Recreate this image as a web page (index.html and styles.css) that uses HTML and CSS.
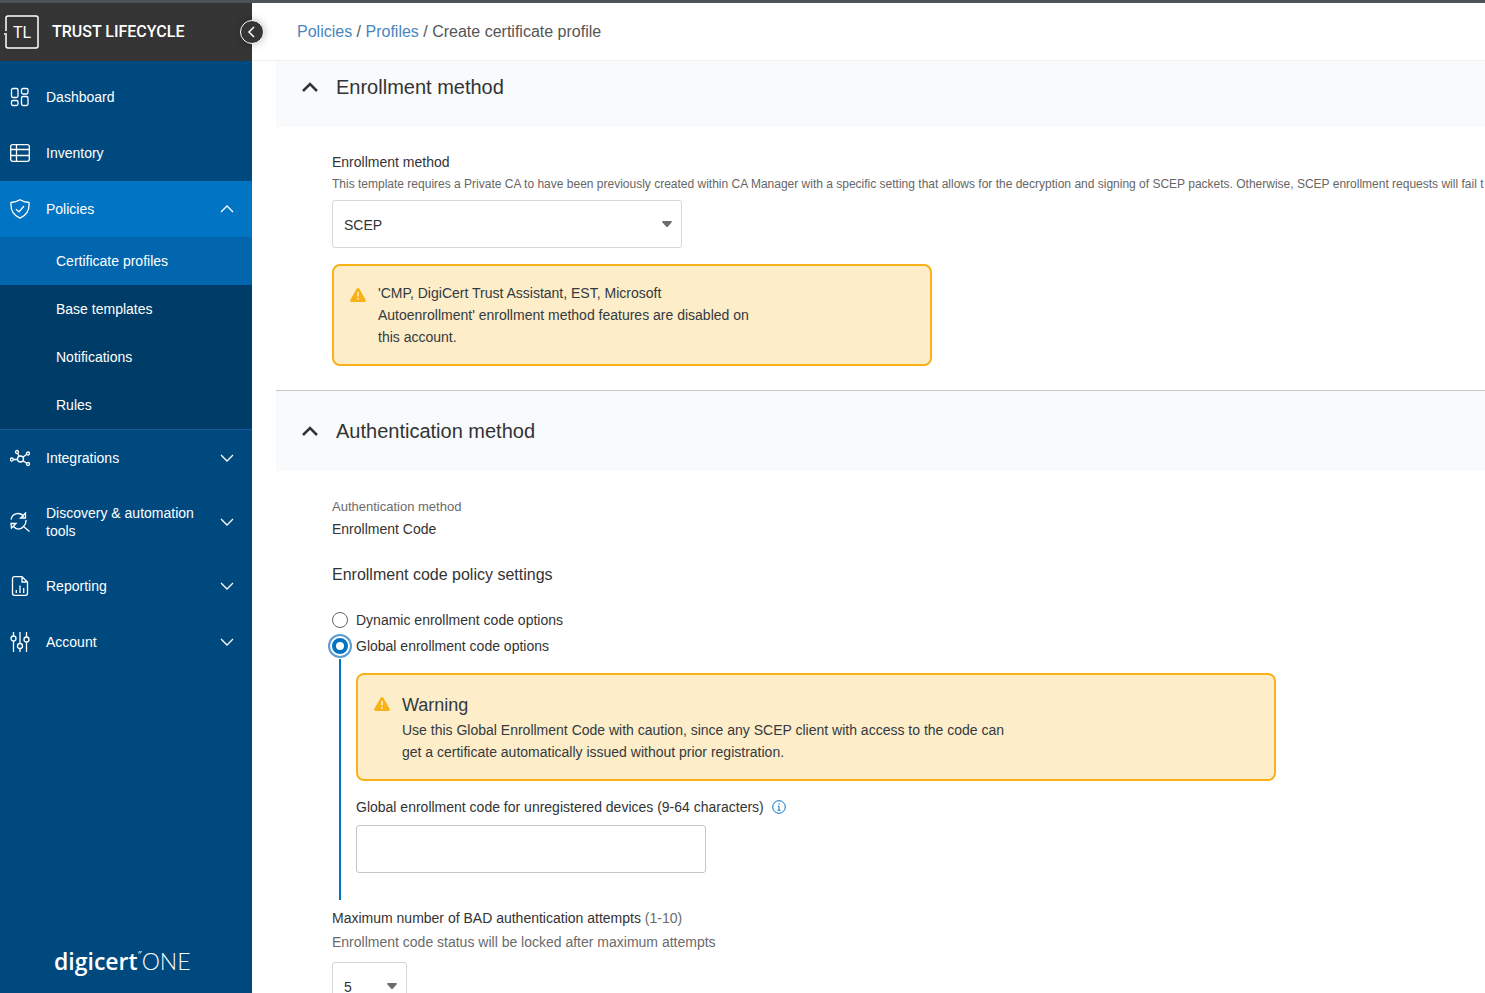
FILE: index.html
```
<!DOCTYPE html>
<html lang="en">
<head>
    <meta charset="UTF-8">
    <title>Create certificate profile</title>
    <link rel="stylesheet" href="styles.css">
</head>
<body>
    <div class="app">
        <aside class="sidebar">
            <div class="brand">
                <svg class="brand-logo" width="36" height="36" viewBox="0 0 36 36" fill="none" stroke="#fff" stroke-width="1.5">
                    <path d="M2 17V4q0-2 2-2h28q2 0 2 2v28q0 2-2 2H4q-2 0-2-2V21"/>
                    <path d="M0 20h3"/>
                    <text class="brand-initials" x="18" y="24" text-anchor="middle">TL</text>
                </svg>
                <span class="brand-name">TRUST LIFECYCLE</span>
                <button class="collapse" aria-label="Collapse menu">
                    <svg width="10" height="12" viewBox="0 0 10 12" fill="none" stroke="#fff" stroke-width="1.5"><path d="M7 1L2 6l5 5"/></svg>
                </button>
            </div>

            <nav class="menu">
                <a class="menu-item" href="#">
                    <svg class="icon" viewBox="0 0 20 20"><rect x="1.5" y="1.5" width="6.5" height="9" rx="1.5"/><rect x="11.5" y="1.5" width="6.5" height="5.5" rx="1.5"/><rect x="1.5" y="13.5" width="6.5" height="5" rx="1.5"/><rect x="11.5" y="9.5" width="6.5" height="9" rx="1.5"/></svg>
                    <span>Dashboard</span>
                </a>
                <a class="menu-item" href="#">
                    <svg class="icon" viewBox="0 0 20 20"><rect x=".7" y="1.7" width="18.6" height="16.6" rx="2"/><path d="M1 6.5h18M1 12.5h18M6.5 2v16"/></svg>
                    <span>Inventory</span>
                </a>
                <a class="menu-item active" href="#">
                    <svg class="icon" viewBox="0 0 20 20"><path d="M10 .8c3 1.9 5.700 2.500 9 2.700.6 7-1.500 12.500-9 15.700C2.500 16 .4 10.500 1 3.500 4.300 3.300 7 2.700 10 .8zM6 10.200l3 2.600L14 7"/></svg>
                    <span>Policies</span>
                    <svg class="chevron" viewBox="0 0 12 8"><path d="M0 7l6-6 6 6"/></svg>
                </a>
                <div class="submenu">
                    <a class="selected" href="#">Certificate profiles</a>
                    <a href="#">Base templates</a>
                    <a href="#">Notifications</a>
                    <a href="#">Rules</a>
                </div>
                <a class="menu-item" href="#">
                    <svg class="icon" viewBox="0 0 20 20"><circle cx="10.500" cy="11" r="3"/><circle cx="1.800" cy="11.500" r="1.500"/><circle cx="7" cy="4" r="1.500"/><circle cx="18" cy="5.500" r="1.500"/><circle cx="18" cy="16" r="1.500"/><path d="M3.300 11.500h4.200M7.700 5.500l1.500 2.800M16.700 6.200l-3.800 3M16.700 15.200l-3.600-2.400"/></svg>
                    <span>Integrations</span>
                    <svg class="chevron" viewBox="0 0 12 8"><path d="M0 1l6 6 6-6"/></svg>
                </a>
                <a class="menu-item" href="#">
                    <svg class="icon" viewBox="0 0 20 20"><path d="M1 7.500C2.500 1 10-.5 14 4.500M15.500 1v5h-5zM1 11.500h5l-4.500 4.500zM3.500 14.500c3 3.500 7 3.500 10 0M16 8c.3 3-1 5-2.500 6.500l6 5"/></svg>
                    <span>Discovery &amp; automation tools</span>
                    <svg class="chevron" viewBox="0 0 12 8"><path d="M0 1l6 6 6-6"/></svg>
                </a>
                <a class="menu-item" href="#">
                    <svg class="icon" viewBox="0 0 20 20"><path d="M12 .7H4.500q-2 0-2 2v14.600q0 2 2 2h11q2 0 2-2V6L12 .7V6h5.500M6.300 17v-3M10 17V9.500M13.700 17v-5"/></svg>
                    <span>Reporting</span>
                    <svg class="chevron" viewBox="0 0 12 8"><path d="M0 1l6 6 6-6"/></svg>
                </a>
                <a class="menu-item" href="#">
                    <svg class="icon" viewBox="0 0 20 20"><circle cx="3.500" cy="6.500" r="2.500"/><circle cx="10" cy="14" r="2.500"/><circle cx="16.500" cy="7.500" r="2.500"/><path d="M3.500 0v4M3.500 9v11M10 0v11.500M10 16.500V20M16.500 0v5M16.500 10v10"/></svg>
                    <span>Account</span>
                    <svg class="chevron" viewBox="0 0 12 8"><path d="M0 1l6 6 6-6"/></svg>
                </a>
            </nav>

            <div class="footer-logo"><b>digicert</b><sup>&Prime;</sup><span>ONE</span></div>
        </aside>

        <main class="content">
            <header class="breadcrumb">
                <a href="#">Policies</a> / <a href="#">Profiles</a> / Create certificate profile
            </header>

            <section class="section">
                <h2 class="section-title scrolled">
                    <svg width="16" height="10" viewBox="0 0 16 10" fill="none" stroke="#333" stroke-width="2.500"><path d="M1 9l7-7 7 7"/></svg>
                    Enrollment method
                </h2>
                <div class="section-body">
                    <label class="field-label" for="method">Enrollment method</label>
                    <p class="hint">This template requires a Private CA to have been previously created within CA Manager with a specific setting that allows for the decryption and signing of SCEP packets. Otherwise, SCEP enrollment requests will fail t</p>
                    <div class="select">
                        <select id="method"><option>SCEP</option></select>
                        <svg width="10" height="6" viewBox="0 0 10 6" fill="#696d70"><path d="M1 0h8q1.500 0 .5 1.500L6 5.500q-1 1-2 0L.5 1.500Q-.5 0 1 0z"/></svg>
                    </div>
                    <div class="alert alert-small">
                        <svg class="alert-icon" viewBox="0 0 16 14"><path fill="#f8b217" d="M6.700.8q1.300-1.600 2.600 0l6.300 11q.8 2-1.100 2.200h-13Q-.4 13.800.4 11.800z"/><path stroke="#fdedc8" stroke-width="1.600" d="M8 4v4.500M8 10v1.700"/></svg>
                        <p>'CMP, DigiCert Trust Assistant, EST, Microsoft Autoenrollment' enrollment method features are disabled on this account.</p>
                    </div>
                </div>
            </section>

            <section class="section">
                <h2 class="section-title">
                    <svg width="16" height="10" viewBox="0 0 16 10" fill="none" stroke="#333" stroke-width="2.500"><path d="M1 9l7-7 7 7"/></svg>
                    Authentication method
                </h2>
                <div class="section-body">
                    <div class="caption">Authentication method</div>
                    <div class="value">Enrollment Code</div>
                    <h3>Enrollment code policy settings</h3>
                    <label class="radio"><input type="radio" name="code-options">Dynamic enrollment code options</label>
                    <label class="radio"><input type="radio" name="code-options" checked>Global enrollment code options</label>

                    <div class="nested">
                        <div class="alert alert-wide">
                            <svg class="alert-icon" viewBox="0 0 16 14"><path fill="#f8b217" d="M6.700.8q1.300-1.600 2.600 0l6.300 11q.8 2-1.100 2.200h-13Q-.4 13.800.4 11.800z"/><path stroke="#fdedc8" stroke-width="1.600" d="M8 4v4.500M8 10v1.700"/></svg>
                            <div>
                                <h4>Warning</h4>
                                <p>Use this Global Enrollment Code with caution, since any SCEP client with access to the code can get a certificate automatically issued without prior registration.</p>
                            </div>
                        </div>
                        <div class="code-label">
                            <label for="global-code">Global enrollment code for unregistered devices (9-64 characters)</label>
                            <svg width="14" height="14" viewBox="0 0 14 14" fill="none" stroke="#0174c3"><circle cx="7" cy="7" r="6.300"/><path d="M7 3.200v1.400M5.800 6.200H7v4M5.500 10.200h3"/></svg>
                        </div>
                        <input class="text-input" id="global-code" type="text">
                    </div>

                    <label class="attempts-label" for="attempts">Maximum number of BAD authentication attempts <span>(1-10)</span></label>
                    <p class="attempts-hint">Enrollment code status will be locked after maximum attempts</p>
                    <div class="select select-small">
                        <select id="attempts"><option>5</option></select>
                        <svg width="10" height="6" viewBox="0 0 10 6" fill="#696d70"><path d="M1 0h8q1.500 0 .5 1.500L6 5.500q-1 1-2 0L.5 1.500Q-.5 0 1 0z"/></svg>
                    </div>
                </div>
            </section>
        </main>
    </div>
</body>
</html>
```
FILE: styles.css
```
* {
    box-sizing: border-box;
}
body {
    margin: 0;
    font-family: "Liberation Sans", Arial, sans-serif;
    font-size: 14px;
    line-height: 22px;
    color: #333;
    background-color: #fff;
}
h2, h3, h4, p {
    margin: 0;
    font-weight: normal;
}
.app {
    display: flex;
    height: 100vh;
    border-top: 3px solid #4b5559;
    overflow: hidden;
}

/* Sidebar */
.sidebar {
    display: flex;
    flex-direction: column;
    flex: none;
    width: 252px;
    background-color: #00497f;
    color: #fff;
}
.brand {
    position: relative;
    display: flex;
    align-items: center;
    gap: 12px;
    height: 58px;
    padding-left: 4px;
    background-color: #353535;
}
.brand-initials {
    font-family: Roboto, sans-serif;
    font-size: 16px;
    fill: #fff;
    stroke: none;
}
.brand-name {
    font-family: Roboto, sans-serif;
    font-size: 16px;
    font-weight: 500;
}
.collapse {
    position: absolute;
    right: -12px;
    top: 17px;
    display: flex;
    align-items: center;
    justify-content: center;
    width: 24px;
    height: 24px;
    padding: 0;
    border: 1px solid #fff;
    border-radius: 50%;
    background-color: #353535;
    box-shadow: 0 0 8px rgba(0,0,0,0.25);
    cursor: pointer;
}
.menu {
    padding-top: 8px;
}
.menu-item {
    display: flex;
    align-items: center;
    gap: 16px;
    min-height: 56px;
    padding: 18px 19px 18px 10px;
    line-height: 18px;
    color: #fff;
    text-decoration: none;
}
.menu-item span {
    flex: 1;
}
.menu-item.active {
    background-color: #0174c3;
}
.icon {
    flex: none;
    width: 20px;
    height: 20px;
    fill: none;
    stroke: #fff;
    stroke-width: 1.3;
}
.chevron {
    flex: none;
    width: 12px;
    height: 8px;
    fill: none;
    stroke: #fff;
    stroke-width: 1.3;
    overflow: visible;
}
.submenu {
    background-color: #003c68;
    border-bottom: 1px solid #16599a;
}
.submenu a {
    display: block;
    padding: 13px 56px;
    color: #fff;
    text-decoration: none;
}
.submenu .selected {
    background-color: #0166ad;
}
.footer-logo {
    display: flex;
    align-items: center;
    margin-top: auto;
    padding: 0 0 16px 54px;
    font-family: "Open Sans", sans-serif;
    font-size: 23px;
    line-height: 32px;
}
.footer-logo b {
    font-weight: 600;
}
.footer-logo sup {
    align-self: flex-start;
    font-size: 10px;
    line-height: 20px;
}
.footer-logo span {
    font-family: Lato, sans-serif;
    font-weight: 300;
}

/* Content */
.content {
    flex: 1;
    min-width: 0;
}
.breadcrumb {
    height: 58px;
    padding: 18px 45px 17px;
    border-bottom: 1px solid #eef0f2;
    font-size: 16px;
    color: #555;
}
.breadcrumb a {
    color: #4a86bd;
    text-decoration: none;
}
.section {
    margin-left: 24px;
}
.section + .section {
    border-top: 1px solid #c4c6c8;
}
.section-title {
    display: flex;
    align-items: center;
    gap: 18px;
    height: 80px;
    padding-left: 26px;
    background-color: #f8fafc;
    font-size: 20px;
}
.section-title.scrolled {
    height: 66px;
    padding-bottom: 14px;
}
.section-body {
    padding: 24px 0 24px 56px;
}
.field-label {
    display: block;
}
.hint {
    margin-bottom: 5px;
    font-size: 12px;
    color: #666;
    white-space: nowrap;
    overflow: hidden;
}
.select {
    display: grid;
    align-items: center;
    width: 350px;
}
.select select,
.select svg {
    grid-area: 1 / 1;
}
.select svg {
    justify-self: end;
    margin-right: 10px;
    pointer-events: none;
}
.select select {
    appearance: none;
    width: 100%;
    height: 48px;
    padding: 1px 11px 0;
    border: 1px solid #d4d6d8;
    border-radius: 3px;
    background-color: #fff;
    font: inherit;
    color: #333;
}
.select-small {
    width: 75px;
}
.alert {
    display: flex;
    gap: 12px;
    padding: 16px;
    border: 2px solid #f8b217;
    border-radius: 8px;
    background-color: #fdedc8;
    color: #333a41;
}
.alert-small {
    max-width: 600px;
    margin-top: 16px;
}
.alert-small p {
    max-width: 380px;
}
.alert-wide {
    max-width: 920px;
}
.alert-wide p {
    max-width: 610px;
}
.alert h4 {
    font-size: 18px;
    line-height: 28px;
}
.alert-icon {
    flex: none;
    width: 16px;
    height: 14px;
    margin-top: 6px;
}
.caption {
    padding-top: 1px;
    font-size: 13px;
    color: #6b6b6b;
}
.section-body h3 {
    margin: 23px 0 20px;
    font-size: 16px;
    line-height: 24px;
}
.radio {
    display: flex;
    align-items: center;
    gap: 8px;
    line-height: 26px;
}
.radio input {
    appearance: none;
    width: 16px;
    height: 16px;
    margin: 0;
    border: 1px solid #666;
    border-radius: 50%;
    background-color: #fff;
}
.radio input:checked {
    border: 4px solid #0174c3;
    box-shadow: 0 0 0 2px #fff, 0 0 0 4px #5b9bd3;
}
.nested {
    margin-left: 7px;
    padding: 14px 0 27px 15px;
    border-left: 2px solid #0174c3;
}
.code-label {
    display: flex;
    align-items: center;
    gap: 8px;
    margin: 16px 0 8px;
    line-height: 20px;
}
.text-input {
    display: block;
    width: 350px;
    height: 48px;
    padding: 0 11px;
    border: 1px solid #c4c6c8;
    border-radius: 3px;
    font: inherit;
}
.attempts-label {
    display: block;
    margin-top: 8px;
    line-height: 20px;
}
.attempts-label span,
.attempts-hint {
    color: #6b6b6b;
}
.attempts-hint {
    margin: 4px 0 10px;
    line-height: 20px;
}
```
